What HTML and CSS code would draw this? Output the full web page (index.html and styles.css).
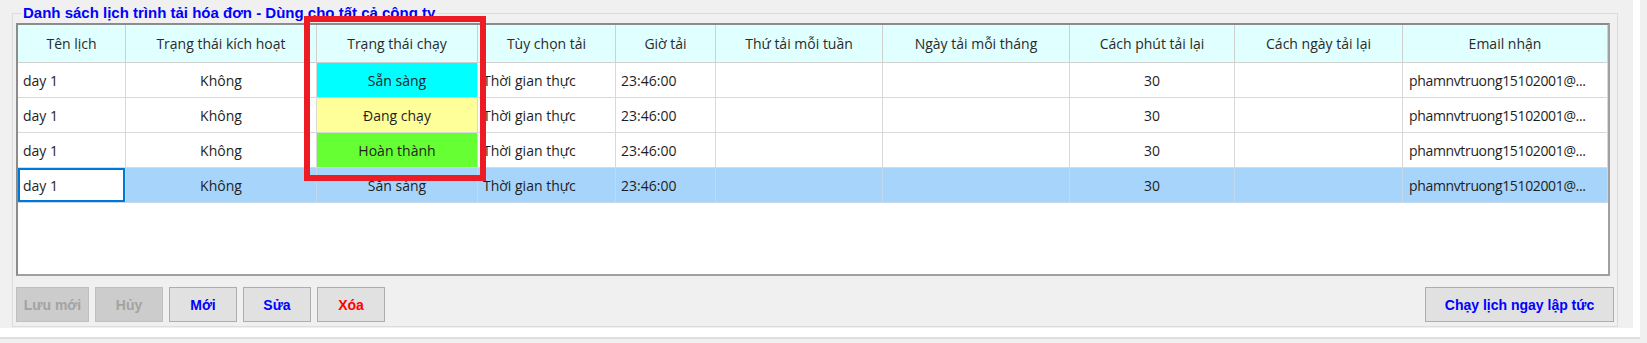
FILE: index.html
```html
<!DOCTYPE html>
<html lang="vi">

<head>
    <meta charset="UTF-8">
    <meta name="viewport" content="width=device-width, initial-scale=1.0">
    <title>Lịch trình tải hóa đơn</title>
    <link rel="stylesheet" href="styles.css">
</head>

<body>
    <div class="panel">
        <fieldset class="groupBox">
            <legend>Danh sách lịch trình tải hóa đơn - Dùng cho tất cả công ty</legend>

            <div class="grid">
                <div class="row head">
                    <div class="cell">Tên lịch</div>
                    <div class="cell">Trạng thái kích hoạt</div>
                    <div class="cell">Trạng thái chạy</div>
                    <div class="cell">Tùy chọn tải</div>
                    <div class="cell">Giờ tải</div>
                    <div class="cell">Thứ tải mỗi tuần</div>
                    <div class="cell">Ngày tải mỗi tháng</div>
                    <div class="cell">Cách phút tải lại</div>
                    <div class="cell">Cách ngày tải lại</div>
                    <div class="cell">Email nhận</div>
                </div>
                <div class="row">
                    <div class="cell left">day 1</div>
                    <div class="cell">Không</div>
                    <div class="cell ready">Sẵn sàng</div>
                    <div class="cell left">Thời gian thực</div>
                    <div class="cell left">23:46:00</div>
                    <div class="cell"></div>
                    <div class="cell"></div>
                    <div class="cell">30</div>
                    <div class="cell"></div>
                    <div class="cell left email">phamnvtruong15102001@...</div>
                </div>
                <div class="row">
                    <div class="cell left">day 1</div>
                    <div class="cell">Không</div>
                    <div class="cell running">Đang chạy</div>
                    <div class="cell left">Thời gian thực</div>
                    <div class="cell left">23:46:00</div>
                    <div class="cell"></div>
                    <div class="cell"></div>
                    <div class="cell">30</div>
                    <div class="cell"></div>
                    <div class="cell left email">phamnvtruong15102001@...</div>
                </div>
                <div class="row">
                    <div class="cell left">day 1</div>
                    <div class="cell">Không</div>
                    <div class="cell done">Hoàn thành</div>
                    <div class="cell left">Thời gian thực</div>
                    <div class="cell left">23:46:00</div>
                    <div class="cell"></div>
                    <div class="cell"></div>
                    <div class="cell">30</div>
                    <div class="cell"></div>
                    <div class="cell left email">phamnvtruong15102001@...</div>
                </div>
                <div class="row selected">
                    <div class="cell left focus">day 1</div>
                    <div class="cell">Không</div>
                    <div class="cell">Sẵn sàng</div>
                    <div class="cell left">Thời gian thực</div>
                    <div class="cell left">23:46:00</div>
                    <div class="cell"></div>
                    <div class="cell"></div>
                    <div class="cell">30</div>
                    <div class="cell"></div>
                    <div class="cell left email">phamnvtruong15102001@...</div>
                </div>

                <!-- red marker round the status column -->
                <div class="marker"></div>
            </div>

            <div class="toolbar">
                <button class="btn wide" disabled>Lưu mới</button>
                <button class="btn" disabled>Hủy</button>
                <button class="btn blue">Mới</button>
                <button class="btn blue">Sửa</button>
                <button class="btn red">Xóa</button>
                <button class="btn blue run">Chạy lịch ngay lập tức</button>
            </div>
        </fieldset>
    </div>
</body>

</html>
```

FILE: styles.css
```css
body {
    margin: 0;
    width: 1647px;
    height: 343px;
    background: #f0f0f0;
    font-family: "Open Sans", "Noto Sans", sans-serif;
    overflow: hidden;
}

/* outer form panel, white edge on right and bottom */
.panel {
    width: 1606px;
    height: 325px;
    padding: 3px 15px 0 12px;
    border-right: 7px solid #fff;
    border-bottom: 9px solid #fff;
    box-shadow: 0 2px 0 #dedede;
}

.groupBox {
    margin: 0;
    padding: 0 3px 4px 3px;
    min-width: 0;
    border: 1px solid #dcdcdc;
    width: 1606px;
    box-sizing: border-box;
}

.groupBox legend {
    margin-left: 5px;
    padding: 0 2px;
    height: 20px;
    line-height: 20px;
    font-family: "Liberation Sans", Arial, sans-serif;
    font-weight: bold;
    font-size: 15px;
    color: #0000ff;
}

/* data grid */
.grid {
    position: relative;
    width: 1594px;
    height: 253px;
    box-sizing: border-box;
    border: 2px solid #7d7d7d;
    border-color: #8c8c8c #a0a0a0 #a0a0a0 #8c8c8c;
    background: #fff;
    font-size: 14px;
    color: #1e1e1e;
}

.row {
    display: grid;
    grid-template-columns: 108px 191px 161px 138px 100px 167px 187px 165px 168px 205px;
    height: 35px;
}

.cell {
    box-sizing: border-box;
    border-right: 1px solid #d9d9d9;
    border-bottom: 1px solid #d9d9d9;
    display: flex;
    align-items: center;
    justify-content: center;
    white-space: nowrap;
    overflow: hidden;
}

.cell.left {
    justify-content: flex-start;
    padding-left: 5px;
}

.cell.email {
    padding-left: 6px;
    letter-spacing: -0.35px;
}

.head {
    height: 38px;
}

.head .cell {
    background: #e0ffff;
    border-color: #d0d0d0;
    color: #2a2a2a;
}

.ready {
    background: #00ffff;
}

.running {
    background: #ffff99;
}

.done {
    background: #66ff33;
}

.selected .cell {
    background: #a6d4fa;
    border-color: #c6d9ea;
}

.selected .cell.focus {
    background: #fff;
    box-shadow: inset 0 0 0 2px #0078d7;
}

.marker {
    position: absolute;
    left: 286px;
    top: -9px;
    width: 182px;
    height: 165px;
    box-sizing: border-box;
    border: 6px solid #ed1c24;
}

/* buttons under the grid */
.toolbar {
    display: flex;
    gap: 6px;
    margin-top: 11px;
}

.btn {
    width: 68px;
    height: 35px;
    padding: 0;
    border: 1px solid #adadad;
    background: #e1e1e1;
    font-family: "Liberation Sans", Arial, sans-serif;
    font-weight: bold;
    font-size: 14px;
}

.btn.wide {
    width: 73px;
}

.btn:disabled {
    background: #cccccc;
    border-color: #bfbfbf;
    color: #a3a3a3;
}

.btn.blue {
    color: #0000ff;
}

.btn.red {
    color: #ff0000;
}

.btn.run {
    width: 189px;
    margin-left: auto;
}
```
